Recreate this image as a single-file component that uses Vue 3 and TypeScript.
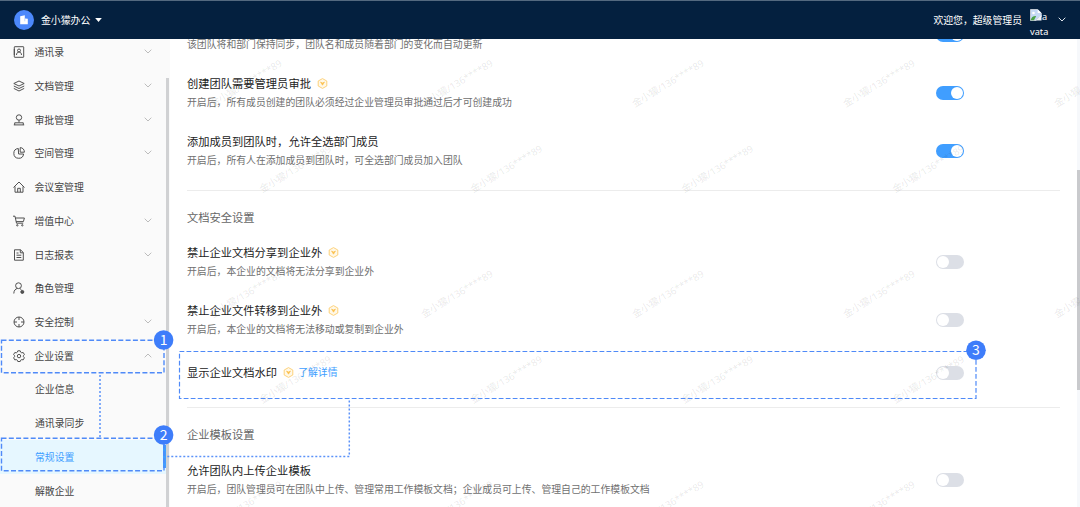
<script setup lang="ts">
interface MenuItem {
  icon: string
  label: string
  arrow?: 'down' | 'up'
}
interface Setting {
  title?: string
  desc?: string
  vip?: boolean
  link?: string
  on: boolean
}
interface Section {
  heading?: string
  rows: Setting[]
}

const menu: MenuItem[] = [
  { icon: 'contacts', label: '通讯录', arrow: 'down' },
  { icon: 'layers', label: '文档管理', arrow: 'down' },
  { icon: 'stamp', label: '审批管理', arrow: 'down' },
  { icon: 'pie', label: '空间管理', arrow: 'down' },
  { icon: 'home', label: '会议室管理' },
  { icon: 'cart', label: '增值中心', arrow: 'down' },
  { icon: 'report', label: '日志报表', arrow: 'down' },
  { icon: 'role', label: '角色管理' },
  { icon: 'security', label: '安全控制', arrow: 'down' },
  { icon: 'gear', label: '企业设置', arrow: 'up' },
]
const submenu = ['企业信息', '通讯录同步', '常规设置', '解散企业']
const active = '常规设置'

const sections: Section[] = [
  {
    rows: [
      { desc: '该团队将和部门保持同步，团队名和成员随着部门的变化而自动更新', on: true },
      { title: '创建团队需要管理员审批', vip: true, desc: '开启后，所有成员创建的团队必须经过企业管理员审批通过后才可创建成功', on: true },
      { title: '添加成员到团队时，允许全选部门成员', desc: '开启后，所有人在添加成员到团队时，可全选部门成员加入团队', on: true },
    ],
  },
  {
    heading: '文档安全设置',
    rows: [
      { title: '禁止企业文档分享到企业外', vip: true, desc: '开启后，本企业的文档将无法分享到企业外', on: false },
      { title: '禁止企业文件转移到企业外', vip: true, desc: '开启后，本企业的文档将无法移动或复制到企业外', on: false },
      { title: '显示企业文档水印', vip: true, link: '了解详情', on: false },
    ],
  },
  {
    heading: '企业模板设置',
    rows: [
      { title: '允许团队内上传企业模板', desc: '开启后，团队管理员可在团队中上传、管理常用工作模板文档；企业成员可上传、管理自己的工作模板文档', on: false },
    ],
  },
]

const marks: { x: number; y: number }[] = []
for (let r = 0; r < 3; r++) {
  for (let c = 0; c < 5; c++) {
    marks.push({ x: 245.8 + c * 211, y: 83 + r * 210.6 })
    if (r < 2 && c < 4) marks.push({ x: 295 + c * 211, y: 168.5 + r * 210.6 })
  }
}

const badges = [
  { n: 1, x: 163.6, y: 340 },
  { n: 2, x: 163.6, y: 435 },
  { n: 3, x: 976, y: 350.2 },
]
</script>

<template>
  <div class="page">
    <header class="topbar">
      <svg class="logo" viewBox="0 0 20 20">
        <circle cx="10" cy="10" r="10" fill="#4c88fb" />
        <path d="M6.200 6.300l4.600-1v3.200l3 .3v5.400H6.200z" fill="#fff" />
        <path d="M10.800 8.300v3" stroke="#a9c6ff" stroke-width=".7" />
      </svg>
      <span class="org">金小獴办公</span>
      <svg class="caret" viewBox="0 0 7 4"><path d="M0.2 0h6.6L3.5 4z" fill="#fff" /></svg>
      <span class="welcome">欢迎您，超级管理员</span>
      <span class="avatar">
        <svg class="broken" viewBox="0 0 12 12">
          <path d="M.5 .5h7.200l3.600 3.600v3.600L8 9l-2 2.500H.5z" fill="#c6d9f5" stroke="#d5d9df" stroke-width=".8" />
          <path d="M7.700 .5v3.600h3.600z" fill="#fff" />
          <circle cx="3.500" cy="4" r="1.300" fill="#fff" />
          <path d="M.7 11.300c.5-3 2.500-4.500 5.500-4.300L4 11.300z" fill="#4ba247" />
          <path d="M5.500 11.500L11.500 6v5.500z" fill="#f1f4f8" />
        </svg><span>a</span><br />vata
      </span>
      <svg class="user-arrow" viewBox="0 0 8 5"><path d="M.7.7L4 4 7.300.7" fill="none" stroke="#dfe5ec" stroke-width="1" /></svg>
    </header>

    <div class="body">
      <nav class="sidebar">
        <div class="menu">
          <div v-for="m in menu" :key="m.label" class="item">
            <svg class="icon" viewBox="0 0 12 12">
              <g v-if="m.icon === 'contacts'">
                <rect x="1.300" y=".7" width="9.400" height="10.600" rx=".4" />
                <circle cx="6" cy="4.500" r="1.500" /><path d="M3.500 9c0-4 5-4 5 0M1.300 3v6" />
              </g>
              <g v-else-if="m.icon === 'layers'">
                <path d="M6 1l5.200 2.500L6 6 .8 3.500zM.8 6L6 8.500 11.200 6M.8 8.400L6 11l5.200-2.600" />
              </g>
              <g v-else-if="m.icon === 'stamp'">
                <circle cx="6" cy="3.500" r="2.700" /><path d="M6 6.200v2.300M1.700 10.900V8.800h8.600v2.100M.8 10.900h10.400" />
              </g>
              <g v-else-if="m.icon === 'pie'">
                <path d="M5.300 1.500A4.900 4.900 0 1 0 10.600 7H5.600zM7.200.6v4.600h4.200C11.400 2.500 9.700.7 7.200.6z" />
              </g>
              <g v-else-if="m.icon === 'home'">
                <path d="M.5 6.500L6 1l5.500 5.500M2 5.500v5.700h8V5.500M4.700 11V7.300h2.600V11" />
              </g>
              <g v-else-if="m.icon === 'cart'">
                <path d="M0 1.200h2l1.500 7h6.700M2.500 3h8.900l-1 3.600H3.200" />
                <circle cx="4.300" cy="10.300" r=".7" /><circle cx="9.300" cy="10.300" r=".7" />
              </g>
              <g v-else-if="m.icon === 'report'">
                <path d="M1.500.8h6L10.300 3.500v7.700H1.500zM7.300.8v3h3M3.500 4h2M3.500 6.200h4.800M3.500 8.500h4.800" />
              </g>
              <g v-else-if="m.icon === 'role'">
                <circle cx="5.500" cy="3.700" r="2.900" /><path d="M.8 11.500c.1-3.300 1.800-4.700 3.600-5M6.800 6.400l1.800 1.700" />
                <circle cx="9.300" cy="9.900" r="1.500" fill="#555" />
              </g>
              <g v-else-if="m.icon === 'security'">
                <circle cx="6" cy="6" r="5" /><path d="M6 1v3M6 8v3M1 6h3M8 6h3" />
              </g>
              <g v-else>
                <path d="M4.800.8h2.400l.5 1.400 1 .6 1.500-.3 1.200 2.100-1 1.100v1l1 1.100-1.200 2.100-1.500-.3-1 .6-.5 1.300H4.800l-.5-1.300-1-.6-1.500.3L.6 7.800l1-1.100v-1l-1-1.100 1.200-2.100 1.500.3 1-.6z" />
                <circle cx="6" cy="6.100" r="1.700" />
              </g>
            </svg>
            <span class="label">{{ m.label }}</span>
            <svg v-if="m.arrow" class="chev" :class="m.arrow" viewBox="0 0 8 5"><path d="M.7.7L4 4 7.300.7" /></svg>
          </div>
          <div v-for="s in submenu" :key="s" class="sub" :class="{ active: s === active }">{{ s }}</div>
        </div>
        <div class="side-thumb"></div>
      </nav>

      <main class="content">
        <section v-for="(sec, i) in sections" :key="i" class="section">
          <h3 v-if="sec.heading">{{ sec.heading }}</h3>
          <div v-for="(row, j) in sec.rows" :key="j" class="row" :class="{ single: !row.desc }">
            <div class="text">
              <div class="title">
                <span v-if="row.title">{{ row.title }}</span>
                <svg v-if="row.vip" class="vip" viewBox="0 0 11 11">
                  <path d="M5.500.6l4.300 2.400v5L5.500 10.400 1.200 8V3z" fill="#fff8e8" stroke="#fdd27c" stroke-width="1" stroke-linejoin="round" />
                  <path d="M3.500 4l2 3.200L7.500 4l-2 1z" fill="#fcc04a" stroke="#fcc04a" stroke-width=".6" />
                </svg>
                <a v-if="row.link">{{ row.link }}</a>
              </div>
              <div v-if="row.desc" class="desc">{{ row.desc }}</div>
            </div>
            <span class="switch" :class="{ on: row.on }"></span>
          </div>
        </section>
      </main>
      <div class="page-track"><div class="page-thumb"></div></div>
    </div>

    <svg class="watermark" viewBox="0 0 1080 507">
      <text v-for="(m, i) in marks" :key="i" text-anchor="middle" textLength="82" dy="4" :transform="`translate(${m.x} ${m.y}) rotate(-31)`">金小獴/136****89</text>
    </svg>

    <svg class="guide" viewBox="0 0 1080 507">
      <g class="dash">
        <rect x="1.500" y="340.200" width="162.500" height="32.600" />
        <rect x="1.500" y="438.200" width="162.500" height="32.600" />
        <rect x="179.500" y="351.500" width="796.500" height="47" class="wide" />
      </g>
      <path class="dots" d="M100 375v62M349.300 400.500v56H166" />
      <g v-for="b in badges" :key="b.n">
        <circle :cx="b.x" :cy="b.y" r="9.800" />
        <text :x="b.x" :y="b.y + 4.800" text-anchor="middle">{{ b.n }}</text>
      </g>
    </svg>
  </div>
</template>

<style>
body {
  margin: 0;
}
</style>

<style scoped>
.page {
  position: relative;
  width: 1080px;
  height: 507px;
  overflow: hidden;
  display: flex;
  flex-direction: column;
  background: #fff;
  font-family: "Noto Sans CJK SC", sans-serif;
  font-size: 9.85px;
  color: #444;
}
.topbar {
  box-sizing: border-box;
  height: 39px;
  flex: none;
  display: flex;
  align-items: center;
  padding: 0 14px;
  background: #04203f;
  border-top: 1px solid #54697f;
  color: #fff;
}
.logo {
  width: 20px;
  height: 20px;
  margin-top: -1px;
}
.org {
  margin-left: 7px;
}
.caret {
  width: 7px;
  height: 4px;
  margin-left: 5px;
}
.welcome {
  margin-left: auto;
}
.avatar {
  width: 20px;
  height: 30px;
  margin: 8px 8px 0;
  line-height: 15px;
  font-family: "Noto Sans", sans-serif;
  font-size: 9.2px;
  white-space: nowrap;
}
.broken {
  width: 12px;
  height: 12px;
  vertical-align: -1px;
}
.user-arrow {
  width: 8px;
  height: 5px;
  margin-top: -1px;
}
.body {
  flex: 1;
  min-height: 0;
  display: flex;
  overflow: hidden;
}
.sidebar {
  width: 170px;
  flex: none;
  display: flex;
  background: #fafafa;
  overflow: hidden;
}
.menu {
  width: 166px;
  margin-top: -3.600px;
}
.item,
.sub {
  height: 33.720px;
  display: flex;
  align-items: center;
}
.icon {
  width: 12px;
  height: 12px;
  margin-left: 12.500px;
  fill: none;
  stroke: #484848;
  stroke-width: 0.95;
}
.label {
  margin-left: 10px;
}
.chev {
  width: 8px;
  height: 5px;
  margin: -1px 14px 0 auto;
  fill: none;
  stroke: #b4b4b4;
  stroke-width: 0.9;
}
.chev.up {
  transform: rotate(180deg);
}
.sub {
  box-sizing: border-box;
  padding-left: 35px;
}
.sub.active {
  color: #409eff;
  background: linear-gradient(#409eff, #409eff) right 0 center / 3px 23px no-repeat, #e6f7ff;
}
.side-thumb {
  width: 3px;
  margin-top: 39px;
  background: #d0d1d3;
}
.content {
  flex: 1;
  padding-left: 17px;
  padding-right: 17px;
  margin-top: -23.200px;
  background: #fff;
}
.section {
  border-bottom: 1px solid #ececec;
}
.section:last-child {
  border: 0;
}
h3 {
  margin: 0;
  padding: 16px 0;
  height: 20px;
  line-height: 20px;
  font-size: 11.25px;
  font-weight: 400;
  color: #666;
}
.section:last-child h3 {
  padding-bottom: 16.700px;
}
.row {
  display: flex;
  justify-content: space-between;
  height: 58px;
  padding-right: 96px;
}
.row.single {
  height: 44px;
  padding-top: 4px;
}
.title {
  display: flex;
  align-items: center;
  height: 19px;
  font-size: 11.27px;
  color: #222;
}
.vip {
  width: 11px;
  height: 11px;
  margin-left: 6px;
}
.title a {
  margin-left: 4px;
  font-size: 9.85px;
  color: #409eff;
}
.desc {
  height: 19px;
  line-height: 19.600px;
  color: #707070;
}
.switch {
  box-sizing: border-box;
  width: 28px;
  height: 14px;
  margin-top: 12px;
  padding: 1px;
  display: flex;
  border-radius: 7px;
  background: #dcdfe6;
}
.switch::before {
  content: "";
  width: 12px;
  height: 12px;
  border-radius: 50%;
  background: #fff;
}
.switch.on {
  background: #409eff;
  justify-content: flex-end;
}
.row.single .switch {
  margin-top: 3px;
}
.page-track {
  width: 3px;
  flex: none;
  background: #f6f8fb;
}
.page-thumb {
  height: 220px;
  margin-top: 131px;
  background: #c9cacd;
}
.watermark,
.guide {
  position: absolute;
  left: 0;
  top: 0;
  width: 1080px;
  height: 507px;
  pointer-events: none;
}
.watermark {
  clip-path: inset(39px 0 0 170px);
  font-family: "Noto Sans", "Noto Sans CJK SC", sans-serif;
  font-size: 10px;
  font-weight: 500;
  fill: rgba(0, 0, 0, 0.085);
}
.dash rect {
  fill: none;
  stroke: #4f8af8;
  stroke-width: 1.4;
  stroke-dasharray: 5 2.300;
}
.dash .wide {
  stroke-width: 1.2;
  stroke-dasharray: 4.800 2.200;
}
.dots {
  fill: none;
  stroke: #5b92f9;
  stroke-width: 1.5;
  stroke-dasharray: 2 2;
}
.guide circle {
  fill: #3e7dfa;
}
.guide text {
  font-size: 14px;
  fill: #fff;
}
</style>
